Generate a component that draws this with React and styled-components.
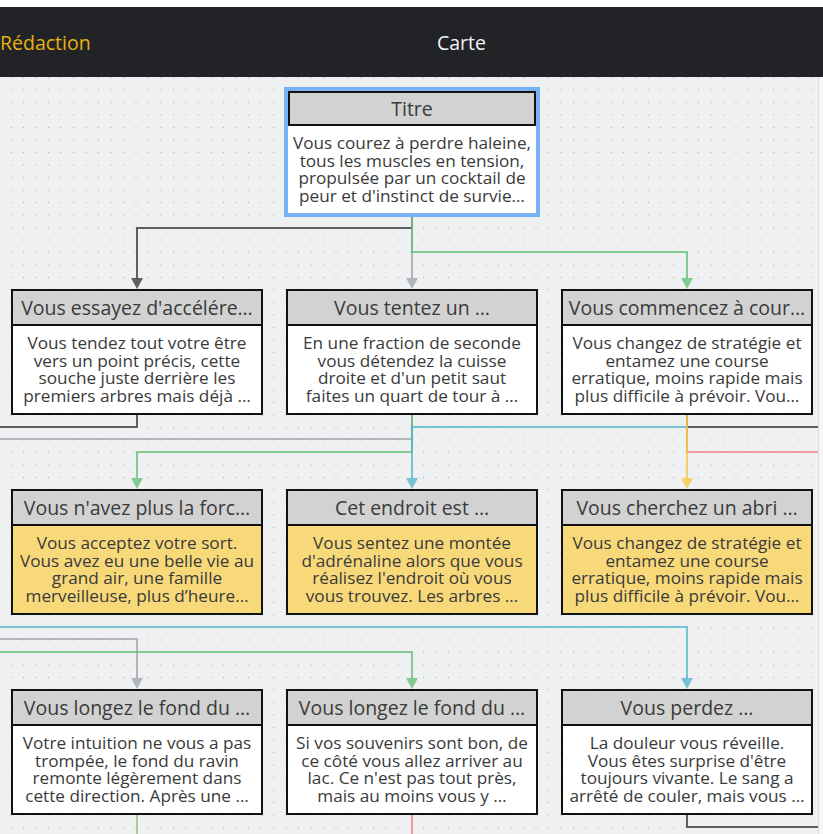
import React from "react";
import styled, { createGlobalStyle } from "styled-components";

const Global = createGlobalStyle`
  html, body { margin: 0; padding: 0; background: #ffffff; }
  body { font-family: "Open Sans", "Noto Sans", sans-serif; }
`;

const nodes = [
  { id: "t", col: 2, row: 1, selected: true, title: "Titre", lines: ["Vous courez à perdre haleine,", "tous les muscles en tension,", "propulsée par un cocktail de", "peur et d'instinct de survie…"] },
  { id: "a", col: 1, row: 2, title: "Vous essayez d'accélére…", lines: ["Vous tendez tout votre être", "vers un point précis, cette", "souche juste derrière les", "premiers arbres mais déjà …"] },
  { id: "b", col: 2, row: 2, title: "Vous tentez un …", lines: ["En une fraction de seconde", "vous détendez la cuisse", "droite et d'un petit saut", "faites un quart de tour à …"] },
  { id: "c", col: 3, row: 2, title: "Vous commencez à cour…", lines: ["Vous changez de stratégie et", "entamez une course", "erratique, moins rapide mais", "plus difficile à prévoir. Vou…"] },
  { id: "d", col: 1, row: 3, end: true, title: "Vous n'avez plus la forc…", lines: ["Vous acceptez votre sort.", "Vous avez eu une belle vie au", "grand air, une famille", "merveilleuse, plus d’heure…"] },
  { id: "e", col: 2, row: 3, end: true, title: "Cet endroit est …", lines: ["Vous sentez une montée", "d'adrénaline alors que vous", "réalisez l'endroit où vous", "vous trouvez. Les arbres …"] },
  { id: "f", col: 3, row: 3, end: true, title: "Vous cherchez un abri …", lines: ["Vous changez de stratégie et", "entamez une course", "erratique, moins rapide mais", "plus difficile à prévoir. Vou…"] },
  { id: "g", col: 1, row: 4, title: "Vous longez le fond du …", lines: ["Votre intuition ne vous a pas", "trompée, le fond du ravin", "remonte légèrement dans", "cette direction. Après une …"] },
  { id: "h", col: 2, row: 4, title: "Vous longez le fond du …", lines: ["Si vos souvenirs sont bon, de", "ce côté vous allez arriver au", "lac. Ce n'est pas tout près,", "mais au moins vous y …"] },
  { id: "i", col: 3, row: 4, title: "Vous perdez …", lines: ["La douleur vous réveille.", "Vous êtes surprise d'être", "toujours vivante. Le sang a", "arrêté de couler, mais vous …"] },
];

const C = {
  dark: "#2e2f31",
  gray: "#9ea2a7",
  green: "#5fbf73",
  cyan: "#4db6cc",
  yellow: "#f7c63a",
  red: "#ef7d85",
  olive: "#98c060",
};

// links drawn in page coordinates (canvas starts at y=77)
const links = [
  { c: C.dark, d: "M412 216 V228 H137 V280", arrow: [137, 289] },
  { c: C.gray, d: "M412 216 V280", arrow: [412, 289] },
  { c: C.green, d: "M412 216 V252 H687 V280", arrow: [687, 289] },
  { c: C.dark, d: "M137 415 V427 H0" },
  { c: C.gray, d: "M412 415 V439 H0" },
  { c: C.green, d: "M412 415 V452 H137 V480", arrow: [137, 489] },
  { c: C.cyan, d: "M687 427 H412 V480", arrow: [412, 489] },
  { c: C.dark, d: "M687 415 V427 H818" },
  { c: C.red, d: "M687 415 V452 H818" },
  { c: C.yellow, d: "M687 415 V480", arrow: [687, 489] },
  { c: C.cyan, d: "M0 627 H687 V680", arrow: [687, 689] },
  { c: C.gray, d: "M0 639 H137 V680", arrow: [137, 689] },
  { c: C.green, d: "M0 652 H412 V680", arrow: [412, 689] },
  { c: C.olive, d: "M137 815 V840" },
  { c: C.red, d: "M412 815 V840" },
  { c: C.dark, d: "M687 815 V827 H818" },
];

function Links() {
  return (
    <Wires width="818" height="757" viewBox="0 77 818 757">
      {links.map((l, i) => (
        <g key={i} opacity="0.75">
          <path d={l.d} stroke={l.c} strokeWidth="2" fill="none" />
          {l.arrow && (
            <polygon
              points={`${l.arrow[0]},${l.arrow[1]} ${l.arrow[0] - 6},${l.arrow[1] - 11} ${l.arrow[0] + 6},${l.arrow[1] - 11}`}
              fill={l.c}
            />
          )}
        </g>
      ))}
    </Wires>
  );
}

function Node({ n }) {
  return (
    <Card $col={n.col} $row={n.row} $selected={n.selected}>
      <Head $selected={n.selected}>{n.title}</Head>
      <Body $end={n.end}>
        {n.lines.map((l, i) => (
          <Line key={i}>{l}</Line>
        ))}
      </Body>
    </Card>
  );
}

export default function App() {
  return (
    <Page>
      <Global />
      <TopBar>
        <Tab>Rédaction</Tab>
        <Title>Carte</Title>
      </TopBar>
      <Canvas>
        <Board>
          <Links />
          <Grid>
            {nodes.map((n) => (
              <Node key={n.id} n={n} />
            ))}
          </Grid>
        </Board>
        <Track />
      </Canvas>
    </Page>
  );
}

const Page = styled.div`
  width: 823px;
  height: 834px;
  padding-top: 7px;
  box-sizing: border-box;
  display: flex;
  flex-direction: column;
  overflow: hidden;
  background: #ffffff;
`;

const TopBar = styled.header`
  height: 70px;
  flex: none;
  background: #222327;
  display: flex;
  align-items: center;
  font-size: 19.5px;
`;

const Tab = styled.div`
  width: 100px;
  color: #e6b20c;
`;

const Title = styled.div`
  flex: 1;
  text-align: center;
  color: #f4f4f4;
`;

const Canvas = styled.main`
  flex: 1;
  display: flex;
  background: #eff0f2;
  overflow: hidden;
`;

const Board = styled.div`
  position: relative;
  width: 818px;
  flex: none;
  background-color: #eff0f2;
  background-image: radial-gradient(circle, #b8bbbf 0.7px, transparent 1px);
  background-size: 12.5px 12.5px;
  background-position: 4.75px 6.75px;
`;

const Track = styled.div`
  flex: 1;
  background: #f5f5f6;
  border-left: 1px solid #dcdde0;
`;

const Wires = styled.svg`
  position: absolute;
  left: 0;
  top: 0;
  display: block;
`;

const Grid = styled.div`
  position: relative;
  display: grid;
  grid-template-columns: repeat(3, 252px);
  grid-auto-rows: 126px;
  column-gap: 23px;
  row-gap: 74px;
  padding: 12px 0 0 11px;
`;

const Card = styled.div`
  grid-column: ${(p) => p.$col};
  grid-row: ${(p) => p.$row};
  display: flex;
  flex-direction: column;
  border: 2px solid ${(p) => (p.$selected ? "#78b2f4" : "#111111")};
  box-shadow: ${(p) => (p.$selected ? "0 0 0 2px #78b2f4" : "none")};
  background: #ffffff;
  color: #3a3a3a;
`;

const Head = styled.div`
  height: 35px;
  flex: none;
  box-sizing: border-box;
  display: flex;
  align-items: center;
  justify-content: center;
  background: #d2d2d2;
  border-bottom: 2px solid #111111;
  ${(p) => (p.$selected ? "border: 2px solid #111111;" : "")}
  font-size: 19.5px;
  white-space: nowrap;
  overflow: hidden;
  padding: 0 2px;
`;

const Body = styled.div`
  flex: 1;
  padding-top: 8px;
  background: ${(p) => (p.$end ? "#f8d97a" : "#ffffff")};
  font-size: 17.2px;
  line-height: 17.6px;
  text-align: center;
`;

const Line = styled.div`
  white-space: nowrap;
`;
